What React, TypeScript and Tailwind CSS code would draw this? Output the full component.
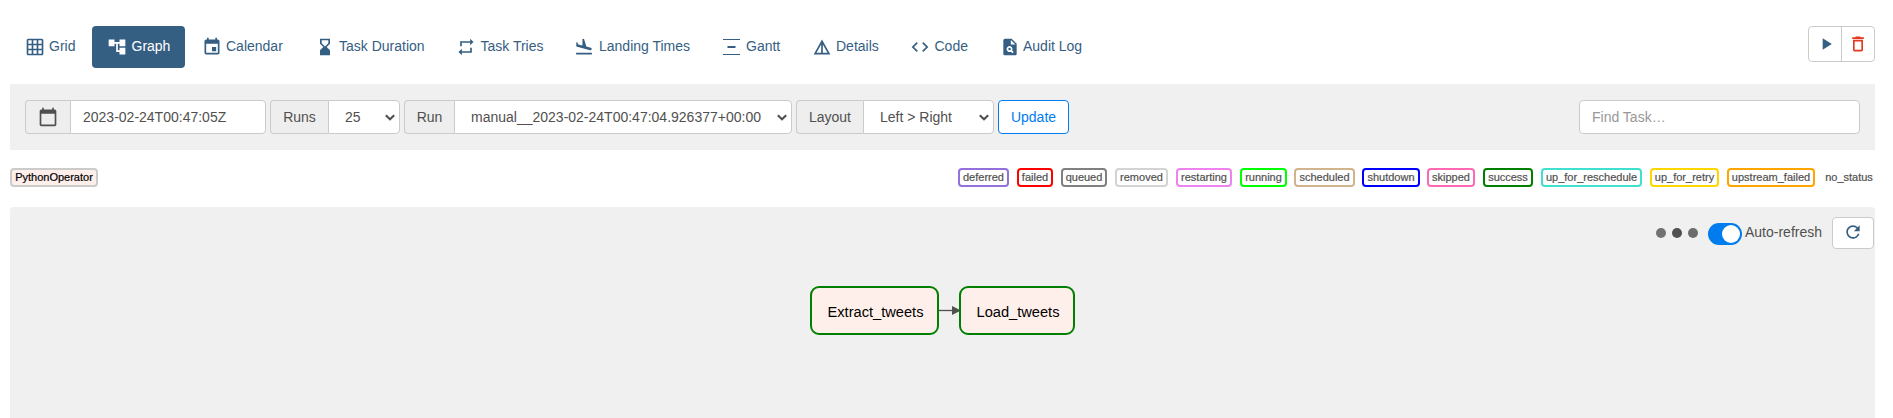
import type { ReactNode } from 'react';
import {
  MdGridOn, MdAccountTree, MdEvent, MdHourglassBottom, MdRepeat, MdFlightLand,
  MdDetails, MdCode, MdPlagiarism, MdPlayArrow, MdDeleteOutline, MdCalendarToday, MdRefresh,
} from 'react-icons/md';

function GanttIcon({ className }: { className?: string }) {
  return (
    <svg className={className} viewBox="0 0 20 20" fill="currentColor">
      <path d="M2 2h17v1H2zM6.5 9h8v2h-8zM2 17h17v1H2z" />
    </svg>
  );
}

const tabs = [
  { label: 'Grid', Icon: MdGridOn, width: 'w-[80px]', gap: 'gap-1' },
  { label: 'Graph', Icon: MdAccountTree, width: 'w-[93px]', gap: 'gap-[4.5px]', active: true },
  { label: 'Calendar', Icon: MdEvent, width: 'w-[111px]', gap: 'gap-1' },
  { label: 'Task Duration', Icon: MdHourglassBottom, width: 'w-[139px]', gap: 'gap-1' },
  { label: 'Task Tries', Icon: MdRepeat, width: 'w-[116px]', gap: 'gap-[4.5px]' },
  { label: 'Landing Times', Icon: MdFlightLand, width: 'w-[145px]', gap: 'gap-[5px]' },
  { label: 'Gantt', Icon: GanttIcon, width: 'w-[89px]', gap: 'gap-[5px]' },
  { label: 'Details', Icon: MdDetails, width: 'w-[96px]', gap: 'gap-1' },
  { label: 'Code', Icon: MdCode, width: 'w-[88px]', gap: 'gap-[4.5px]' },
  { label: 'Audit Log', Icon: MdPlagiarism, width: 'w-[112px]', gap: 'gap-[3px]' },
];

const states = [
  { label: 'deferred', style: 'w-[51px] mr-[8px] border-[mediumpurple]' },
  { label: 'failed', style: 'w-[36px] mr-[8px] border-[red]' },
  { label: 'queued', style: 'w-[46px] mr-[8px] border-[gray]' },
  { label: 'removed', style: 'w-[53px] mr-[8px] border-[lightgrey]' },
  { label: 'restarting', style: 'w-[56px] mr-[8px] border-[violet]' },
  { label: 'running', style: 'w-[47px] mr-[7px] border-[lime]' },
  { label: 'scheduled', style: 'w-[61px] mr-[7px] border-[tan]' },
  { label: 'shutdown', style: 'w-[58px] mr-[7px] border-[blue]' },
  { label: 'skipped', style: 'w-[48px] mr-[8px] border-[hotpink]' },
  { label: 'success', style: 'w-[50px] mr-[8px] border-[green]' },
  { label: 'up_for_reschedule', style: 'w-[101px] mr-[8px] border-[turquoise]' },
  { label: 'up_for_retry', style: 'w-[69px] mr-[8px] border-[gold]' },
  { label: 'upstream_failed', style: 'w-[88px] mr-[8px] border-[orange]' },
  { label: 'no_status', style: 'w-[52px] border-transparent' },
];

function Addon({ className, children }: { className: string; children: ReactNode }) {
  return (
    <span className={`flex shrink-0 items-center justify-center rounded-l border border-r-0 border-[#cbcbcb] bg-[#eeeeee] ${className}`}>
      {children}
    </span>
  );
}

function SelectBox({ className, children }: { className: string; children: ReactNode }) {
  return (
    <span className={`flex items-center justify-between rounded-r border border-[#cbcbcb] bg-white pr-[3px] pl-4 ${className}`}>
      <span className="whitespace-nowrap">{children}</span>
      <svg className="h-3 w-3" viewBox="0 0 12 12" fill="none" stroke="#51504f" strokeWidth="2.1">
        <path d="M1.8 4.2 6 8.2 10.2 4.2" />
      </svg>
    </span>
  );
}

export default function App() {
  return (
    <div className="flex h-[418px] w-full flex-col bg-white pl-[10px] pr-[18px] font-['Liberation_Sans',Arial,sans-serif] text-sm leading-5 text-[#51504f]">
      <nav className="flex h-[84px] items-start justify-between pt-[26px]">
        <ul className="flex gap-[2px]">
          {tabs.map(({ label, Icon, width, gap, active }) => (
            <li key={label} className={`flex h-[42px] shrink-0 items-center whitespace-nowrap rounded pl-[15px] ${gap} ${width} ${active ? 'bg-[#355e83] text-white' : 'text-[#355e83]'}`}>
              <Icon className="h-5 w-5 shrink-0" />
              <span className="-mt-[3px]">{label}</span>
            </li>
          ))}
        </ul>
        <div className="flex h-9 w-[67px] rounded border border-[#cbcbcb]">
          <button className="flex flex-1 items-center justify-center border-r border-[#cbcbcb] pl-[2px] text-[#355e83]">
            <MdPlayArrow className="h-5 w-5" />
          </button>
          <button className="flex w-8 items-center justify-center text-[#e43921]">
            <MdDeleteOutline className="h-5 w-5" />
          </button>
        </div>
      </nav>

      <section className="flex h-[66px] shrink-0 items-center justify-between bg-[#f0f0f0] px-[15px]">
        <div className="flex h-[34px] gap-1">
          <div className="flex w-[241px]">
            <Addon className="w-[45px]"><MdCalendarToday className="h-5 w-5" /></Addon>
            <span className="flex flex-1 items-center rounded-r border border-[#cbcbcb] bg-white pl-3">2023-02-24T00:47:05Z</span>
          </div>
          <div className="flex w-[130px]">
            <Addon className="w-[58px]">Runs</Addon>
            <SelectBox className="flex-1">25</SelectBox>
          </div>
          <div className="flex w-[388px]">
            <Addon className="w-[50px]">Run</Addon>
            <SelectBox className="flex-1">manual__2023-02-24T00:47:04.926377+00:00</SelectBox>
          </div>
          <div className="flex w-[198px]">
            <Addon className="w-[67px]">Layout</Addon>
            <SelectBox className="flex-1">Left &gt; Right</SelectBox>
          </div>
          <button className="w-[71px] rounded border border-[#017cee] bg-white text-[#017cee]">Update</button>
        </div>
        <input className="h-[34px] w-[281px] rounded border border-[#cbcbcb] bg-white px-3 placeholder:text-[#999999]" placeholder="Find Task…" />
      </section>

      <section className="flex h-[57px] shrink-0 items-start justify-between pt-[18px] text-[11px] leading-[15px] [-webkit-text-stroke-width:0.2px]">
        <span className="h-[19px] w-[88px] rounded border-2 border-[#cbcbcb] bg-[#ffefeb] text-center text-black">PythonOperator</span>
        <div className="flex">
          {states.map(({ label, style }) => (
            <span key={label} className={`flex h-[19px] shrink-0 justify-center whitespace-nowrap rounded border-2 ${style}`}>{label}</span>
          ))}
        </div>
      </section>

      <main className="flex min-h-0 flex-1 flex-col rounded-t bg-[#f0f0f0]">
        <div className="flex h-[79px] shrink-0 items-start justify-end pt-[10px] pr-[1px]">
          <div className="mt-[11px] flex gap-[6px]">
            <span className="h-[10px] w-[10px] rounded-full bg-[#727170]" />
            <span className="h-[10px] w-[10px] rounded-full bg-[#51504f]" />
            <span className="h-[10px] w-[10px] rounded-full bg-[#6d6c6b]" />
          </div>
          <span className="mt-[6px] ml-[10px] flex h-[22px] w-[34px] justify-end rounded-full bg-[#017cee] p-[2px]">
            <span className="h-[18px] w-[18px] rounded-full bg-white" />
          </span>
          <span className="mt-[5px] ml-[3px] w-[87px]">Auto-refresh</span>
          <button className="flex h-8 w-[42px] items-center justify-center rounded-sm border border-[#cbcbcb] bg-white pb-[2px] text-[#355e83]">
            <MdRefresh className="h-5 w-5" />
          </button>
        </div>
        <div className="ml-[800px] flex items-center text-[14.65px] text-black">
          <span className="flex h-[49px] w-[129px] items-center justify-center rounded-[9px] border-2 border-[green] bg-[#ffefeb] pt-[2px] pl-[2px]">Extract_tweets</span>
          <svg className="h-5 w-5 overflow-visible" viewBox="0 0 20 20">
            <path d="M0 9.5H15" stroke="#51504f" strokeWidth="1.3" />
            <path d="M13 5 22 9.5 13 14Z" fill="#51504f" />
          </svg>
          <span className="flex h-[49px] w-[116px] items-center justify-center rounded-[9px] border-2 border-[green] bg-[#ffefeb] pt-[2px] pl-[2px]">Load_tweets</span>
        </div>
      </main>
    </div>
  );
}
